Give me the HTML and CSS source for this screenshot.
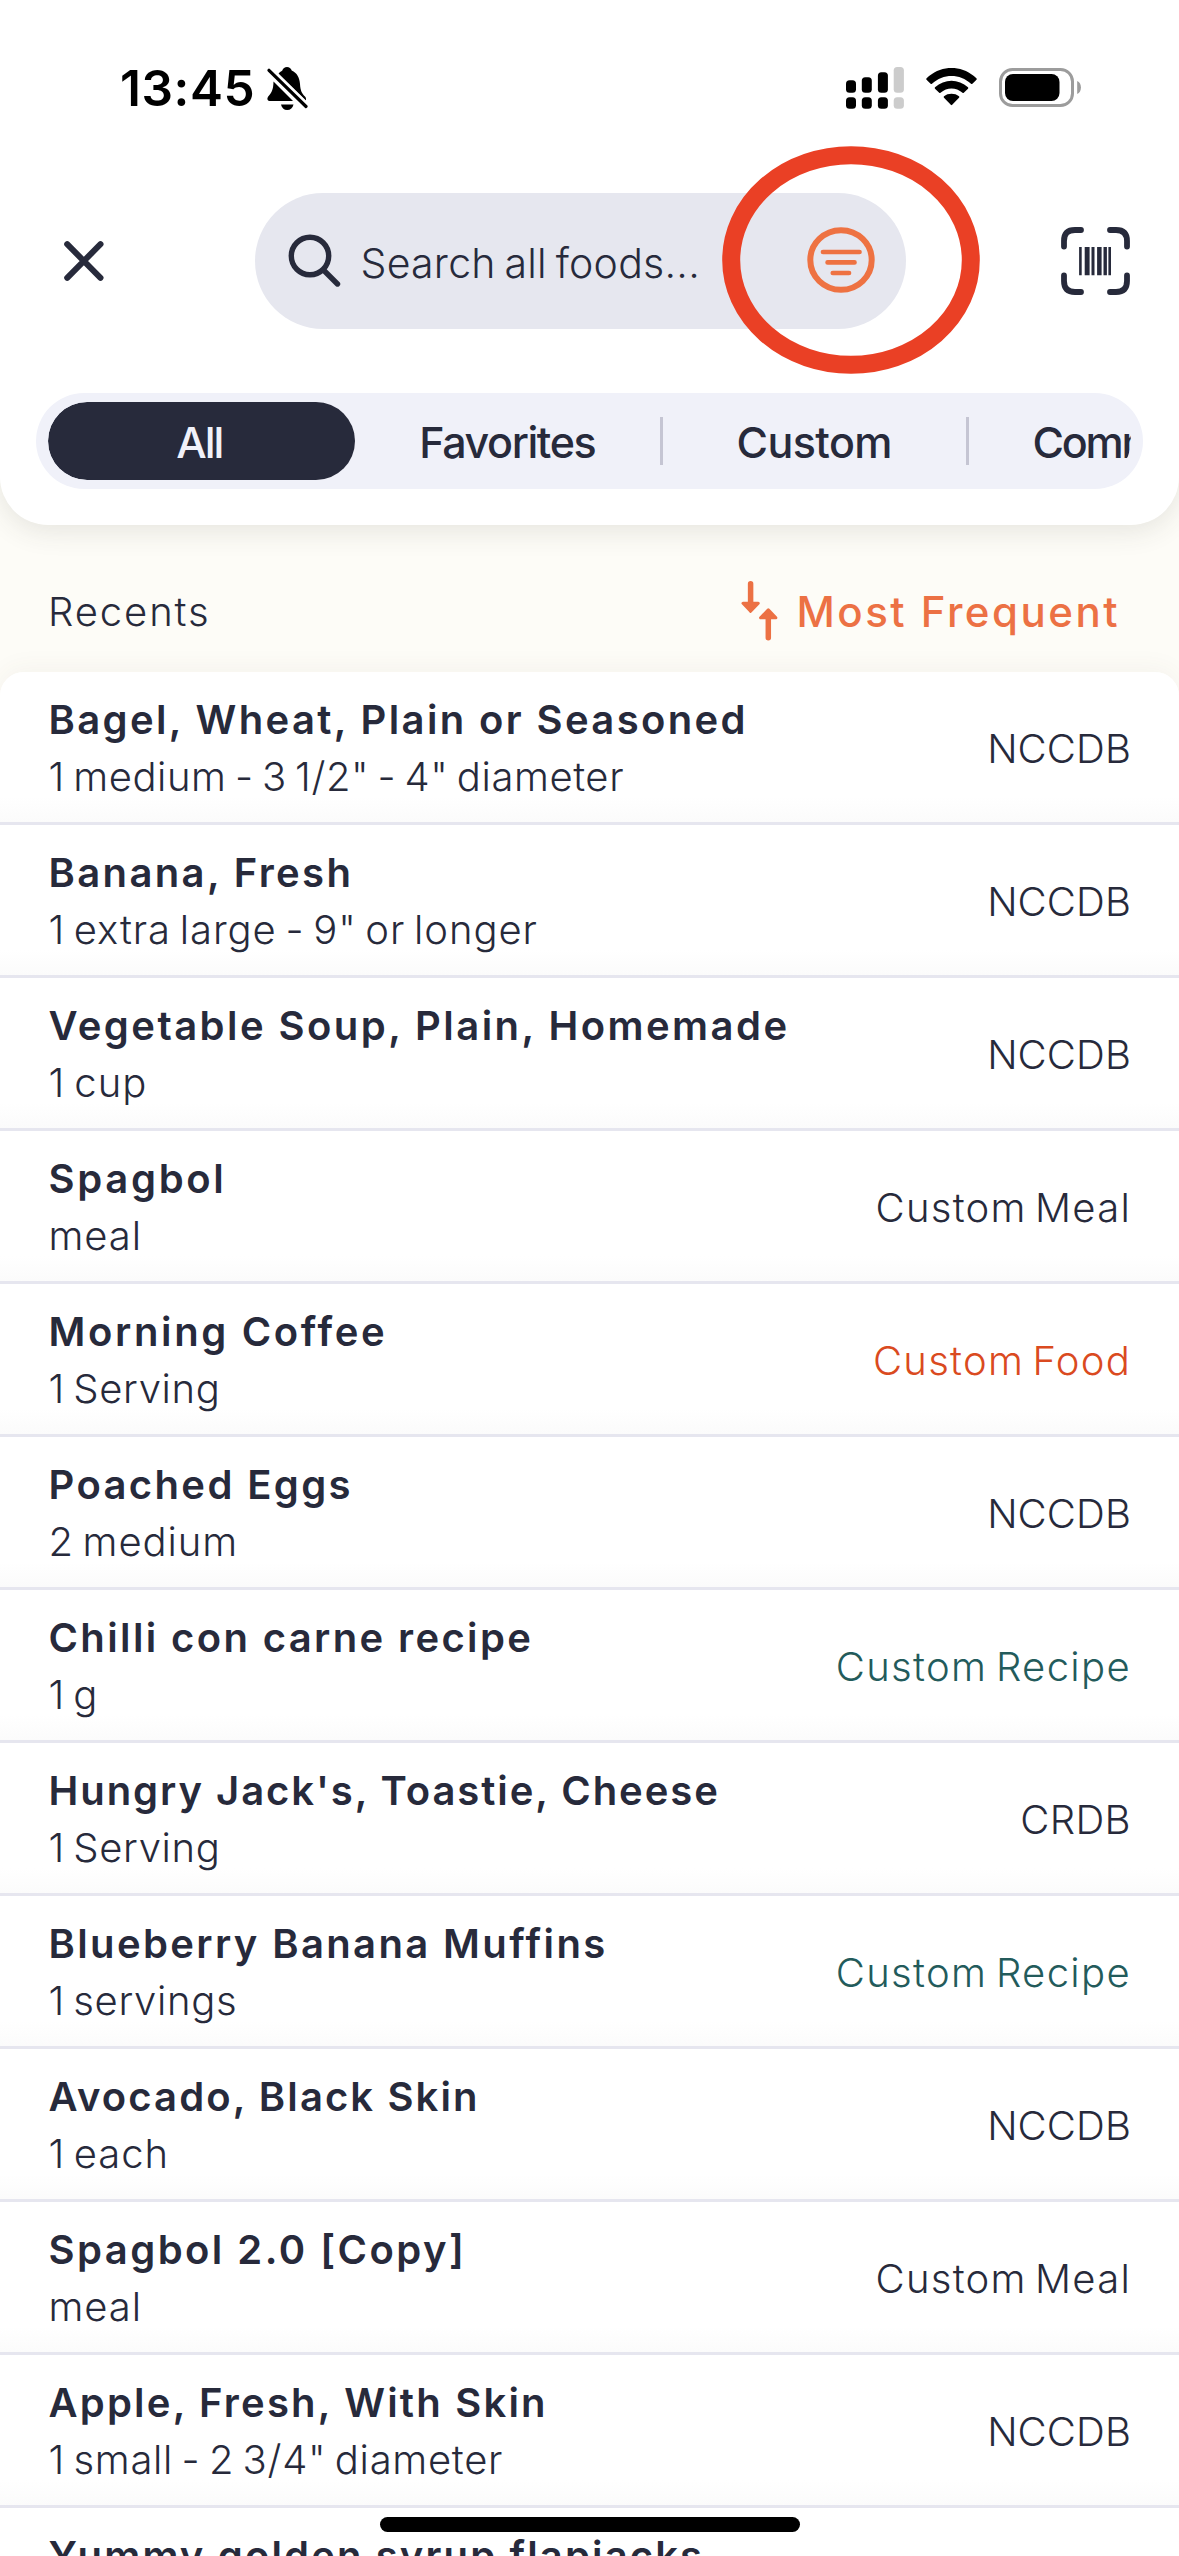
FILE: index.html
```html
<!DOCTYPE html>
<html lang="en">
<head>
<meta charset="utf-8">
<title>Food search</title>
<link rel="stylesheet" href="styles.css">
</head>
<body>
<div class="screen">
  <header class="header">
    <div class="status">
      <span class="time">13:45</span>
      <svg class="bell" viewBox="0 0 41 43" width="41" height="43">
        <path d="M6.500 14.500 26 34H2.500C.3 34-.3 31.500 1.200 29.500 5 25.500 6.300 22 6.500 14.500Z"/>
        <path d="M11.500 6.800C13 5 14 4.600 15.300 3.600 16 1.400 17.800 0 20 0S24 1.400 24.700 3.600C30 6 32.500 10.500 33 17 33.300 23.500 35 26.800 38 29.500 39.200 31 39.300 32.500 38.700 33.700Z"/>
        <path d="M14 37.500H26.500C25.800 41 23.500 43 20.200 43S14.700 41 14 37.500Z"/>
        <path class="slash-gap" d="M4 5.200 37 37.600"/>
        <path class="slash" d="M2 3.300 39 39.500"/>
      </svg>
      <svg class="signal" viewBox="0 0 58 42" width="58" height="42">
        <g><rect y="13.300" width="10" height="12.500" rx="3.500"/><rect x="15.800" y="10.200" width="10" height="15.600" rx="3.500"/><rect x="31.900" y="5.200" width="10" height="20.600" rx="3.500"/>
        <rect y="30.200" width="10" height="11.600" rx="3.500"/><rect x="15.800" y="30.200" width="10" height="11.600" rx="3.500"/><rect x="31.900" y="30.200" width="10" height="11.600" rx="3.500"/></g>
        <g class="dim"><rect x="47.700" width="10.200" height="25.800" rx="3.500"/><rect x="47.700" y="30.200" width="10.200" height="11.600" rx="3.500"/></g>
      </svg>
      <svg class="wifi" viewBox="0 0 51 38" width="51" height="38">
        <path d="M.6 10.300C15-3.600 36-3.600 50.400 10.300 50.900 10.800 50.900 11.200 50.500 11.700L46.400 15.700C45.900 16.200 45.500 16.200 45 15.700 34 5.300 17 5.300 6 15.700 5.500 16.200 5.100 16.200 4.600 15.700L.5 11.700C.1 11.200 .1 10.800 .6 10.300Z"/>
        <path d="M9 19.300C18.500 10.500 32.500 10.500 42 19.300 42.400 19.800 42.400 20.200 42 20.700L37.800 24.800C37.300 25.200 37 25.200 36.500 24.800 30 19 21 19 14.500 24.800 14 25.200 13.700 25.200 13.200 24.800L9 20.700C8.600 20.200 8.600 19.800 9 19.300Z"/>
        <path d="M18 28.300C22 25 29 25 33 28.300 33.500 28.800 33.500 29.300 33 29.800L26.200 36.800C25.700 37.300 25.300 37.300 24.800 36.800L18 29.800C17.500 29.300 17.500 28.800 18 28.300Z"/>
      </svg>
      <svg class="battery" viewBox="0 0 83 39" width="83" height="39">
        <rect class="shell" x="1.500" y="1.500" width="72" height="36" rx="12"/>
        <rect x="6" y="6" width="54.500" height="27" rx="8"/>
        <path class="nub" d="M78.200 13C83.200 15 83.200 24 78.200 26Z"/>
      </svg>
    </div>

    <div class="topbar">
      <svg class="close" viewBox="0 0 40 40" width="40" height="40"><path d="M3.200 3.200 36.500 36.800M36.500 3.200 3.200 36.800"/></svg>
      <div class="search">
        <svg class="glass" viewBox="0 0 53 53" width="53" height="53"><circle cx="22" cy="22" r="18.700"/><path d="M35.500 36 49.500 50"/></svg>
        <span class="placeholder">Search all foods...</span>
        <svg class="filter" viewBox="0 0 68 66" width="68" height="66">
          <ellipse cx="34" cy="33" rx="30.700" ry="29.800"/>
          <path d="M16 25H52.500M20.600 35.400H47.500M25.800 46H42"/>
        </svg>
        <svg class="marker" viewBox="0 0 258 228" width="258" height="228"><ellipse cx="129" cy="114" rx="119.800" ry="104.800"/></svg>
      </div>
      <svg class="barcode" viewBox="0 0 69 68" width="69" height="68">
        <path class="corner" d="M20 3H14Q3 3 3 14V19.500M49 3H55Q66 3 66 14V19.500M3 48.500V54Q3 65 14 65H20M66 48.500V54Q66 65 55 65H49"/>
        <path d="M18.100 20h2.600v28.200h-2.600zM23.700 20h4.900v28.200h-4.900zM30.500 20h3v28.200h-3zM36.100 20h4.500v28.200h-4.500zM42.500 20h3.400v28.200h-3.400zM47.400 20h2.600v28.200h-2.600z"/>
      </svg>
    </div>

    <nav class="tabs">
      <div class="tabs-clip">
        <span class="tab active">All</span>
        <span class="tab favorites">Favorites</span>
        <span class="tab custom">Custom</span>
        <span class="tab common">Common</span>
      </div>
    </nav>
  </header>

  <div class="section">
    <span class="recents">Recents</span>
    <span class="sort">
      <svg viewBox="0 0 37 60" width="37" height="60">
        <path class="stem" d="M9.600 2.800V24M27.300 56.700V36"/>
        <path class="head" d="M2 22.300H17.300L9.600 30.300ZM19.600 36.800H34.900L27.300 28.800Z"/>
      </svg>
      Most Frequent
    </span>
  </div>

  <ul class="list">
    <li class="row"><div class="info"><b>Bagel, Wheat, Plain or Seasoned</b><span>1 medium - 3 1/2" - 4" diameter</span></div><em class="nccdb">NCCDB</em></li>
    <li class="row"><div class="info"><b>Banana, Fresh</b><span>1 extra large - 9" or longer</span></div><em class="nccdb">NCCDB</em></li>
    <li class="row"><div class="info"><b>Vegetable Soup, Plain, Homemade</b><span>1 cup</span></div><em class="nccdb">NCCDB</em></li>
    <li class="row"><div class="info"><b>Spagbol</b><span>meal</span></div><em>Custom Meal</em></li>
    <li class="row"><div class="info"><b>Morning Coffee</b><span>1 Serving</span></div><em class="food">Custom Food</em></li>
    <li class="row"><div class="info"><b>Poached Eggs</b><span>2 medium</span></div><em class="nccdb">NCCDB</em></li>
    <li class="row"><div class="info"><b>Chilli con carne recipe</b><span>1 g</span></div><em class="recipe">Custom Recipe</em></li>
    <li class="row"><div class="info"><b>Hungry Jack's, Toastie, Cheese</b><span>1 Serving</span></div><em class="crdb">CRDB</em></li>
    <li class="row"><div class="info"><b>Blueberry Banana Muffins</b><span>1 servings</span></div><em class="recipe">Custom Recipe</em></li>
    <li class="row"><div class="info"><b>Avocado, Black Skin</b><span>1 each</span></div><em class="nccdb">NCCDB</em></li>
    <li class="row"><div class="info"><b>Spagbol 2.0 [Copy]</b><span>meal</span></div><em>Custom Meal</em></li>
    <li class="row"><div class="info"><b>Apple, Fresh, With Skin</b><span>1 small - 2 3/4" diameter</span></div><em class="nccdb">NCCDB</em></li>
    <li class="row"><div class="info"><b>Yummy golden syrup flapjacks</b></div></li>
  </ul>
  <div class="home"></div>
</div>
</body>
</html>
```
FILE: styles.css
```css
* { box-sizing: border-box; }
body { margin: 0; background: #fdfcf7; }
svg { display: block; flex: none; }
.screen {
  position: relative;
  width: 1179px;
  height: 2556px;
  overflow: hidden;
  display: flex;
  flex-direction: column;
  background: #fdfcf7;
  color: #272a3b;
  font-family: Inter, "Liberation Sans", sans-serif;
  font-size: 40px;
  font-weight: 300;
  white-space: nowrap;
}

/* header */
.header {
  flex: none;
  height: 525px;
  background: #fff;
  border-radius: 0 0 48px 48px;
  box-shadow: 0 6px 28px rgba(60, 60, 50, .12);
}
.status {
  display: flex;
  height: 193px;
  padding: 66px 0 0 120px;
  color: #000;
}
.time {
  width: 148px;
  font-size: 49.5px;
  font-weight: 600;
  line-height: 60px;
  letter-spacing: .6px;
  margin-top: -8px;
}
.bell { margin: 1px 0 0 -1px; }
.bell .slash-gap { stroke: #fff; stroke-width: 8.500px; }
.bell .slash { stroke: #000; stroke-width: 3.200px; stroke-linecap: round; }
.signal { margin: 1px 0 0 538px; }
.dim { fill: #ccc; }
.wifi { margin: 2px 0 0 22px; }
.battery { margin: 2px 0 0 22px; }
.shell { fill: none; stroke: #9c9c9c; stroke-width: 3px; }
.nub { fill: #9c9c9c; }

.topbar { display: flex; height: 200px; padding-left: 64px; }
.close { margin-top: 48px; fill: none; stroke: #272a3b; stroke-width: 6px; stroke-linecap: round; }
.search {
  position: relative;
  display: flex;
  width: 651px;
  height: 135.500px;
  margin-left: 151px;
  border-radius: 68px;
  background: #e6e7ef;
}
.glass { margin: 41px 0 0 32.500px; fill: none; stroke: #272a3b; stroke-width: 5.400px; stroke-linecap: round; }
.placeholder {
  width: 467.500px;
  padding-left: 20px;
  font-size: 41px;
  line-height: 60px;
  margin-top: 40px;
  letter-spacing: .25px;
  word-spacing: -3px;
}
.filter { margin: 34px 0 0 -1px; fill: none; stroke: #ee7242; stroke-width: 6px; stroke-linecap: round; }
.filter path { stroke-width: 4.700px; }
.marker { position: absolute; left: 466.500px; top: -47px; fill: none; stroke: #ea4025; stroke-width: 18px; }
.barcode { margin: 34px 0 0 154.500px; fill: #272a3b; }
.corner { fill: none; stroke: #272a3b; stroke-width: 5.800px; stroke-linecap: round; }

/* tabs */
.tabs {
  width: 1107px;
  height: 96px;
  margin-left: 36px;
  padding: 9px 12px;
  border-radius: 48px;
  background: #f0f1f9;
}
.tabs-clip { display: flex; height: 78px; overflow: hidden; border-radius: 39px; }
.tab {
  flex: none;
  display: flex;
  align-items: center;
  justify-content: center;
  width: 305.500px;
  font-size: 43px;
  font-weight: 500;
  line-height: 60px;
  padding-top: 2px;
}
.active { width: 306.500px; padding-right: 4px; border-radius: 39px; background: #272a3b; color: #f0f1f9; letter-spacing: -2px; }
.favorites { letter-spacing: -1.400px; }
.custom { letter-spacing: -.6px; padding-left: 3px; }
.common { letter-spacing: -2.200px; justify-content: flex-start; padding-left: 67px; }
.custom, .common {
  background: linear-gradient(#c5c5d3, #c5c5d3) 0 15px / 3px 48px no-repeat;
}

/* list heading */
.section {
  flex: none;
  display: flex;
  justify-content: space-between;
  height: 147px;
  padding: 57px 59px 0 48px;
  line-height: 60px;
}
.recents { letter-spacing: 1.900px; }
.sort { display: flex; gap: 18px; color: #ec7144; font-size: 42px; font-weight: 500; letter-spacing: 2.500px; }
.sort svg { margin-top: -1px; fill: #ec7144; stroke: #ec7144; }
.stem { stroke-width: 5.500px; stroke-linecap: round; }
.head { stroke-width: 3px; stroke-linejoin: round; }

/* foods */
.list {
  flex: none;
  margin: 0;
  padding: 0;
  list-style: none;
  background: #fff;
  border-radius: 24px 24px 0 0;
  box-shadow: 0 -4px 24px rgba(90, 80, 50, .05);
  overflow: hidden;
}
.row {
  display: flex;
  justify-content: space-between;
  height: 153px;
  padding: 19px 48px 0 48.500px;
  border-bottom: 3px solid #e6e6ef;
  background: linear-gradient(#fff 125px, #fbfbfb);
  line-height: 57px;
}
.info { display: flex; flex-direction: column; }
.info b { font-weight: 600; letter-spacing: 2.370px; }
.info span { letter-spacing: .65px; word-spacing: -3.500px; }
.row em { margin-top: 29px; font-style: normal; letter-spacing: 1.250px; word-spacing: -4px; }
.row .nccdb { letter-spacing: .1px; }
.row .crdb { letter-spacing: .4px; }
.row .food { color: #da4a20; }
.row .recipe { color: #235b5b; letter-spacing: 1.350px; }
.row:nth-child(1) span { letter-spacing: .58px; }
.row:nth-child(2) span { letter-spacing: .94px; }
.row:nth-child(3) span { letter-spacing: 1.100px; }
.row:nth-child(3) b { letter-spacing: 2.450px; }
.row:nth-child(4) b { letter-spacing: 2.700px; }
.row:nth-child(4) span, .row:nth-child(11) span { letter-spacing: .9px; }
.row:nth-child(5) b { letter-spacing: 2.650px; }
.row:nth-child(6) span, .row:nth-child(10) span { letter-spacing: .9px; }
.row:nth-child(8) b { letter-spacing: 1.940px; }
.row:nth-child(10) b { letter-spacing: 2.100px; }
.row:nth-child(12) b { letter-spacing: 2.200px; }
.row:nth-child(11) b { letter-spacing: 2.450px; }
.row:nth-child(12) span { letter-spacing: .71px; }
.row:nth-child(13) b { letter-spacing: 2.140px; }

.home {
  position: absolute;
  left: 380px;
  top: 2517px;
  width: 420px;
  height: 15px;
  border-radius: 8px;
  background: #000;
}
```
